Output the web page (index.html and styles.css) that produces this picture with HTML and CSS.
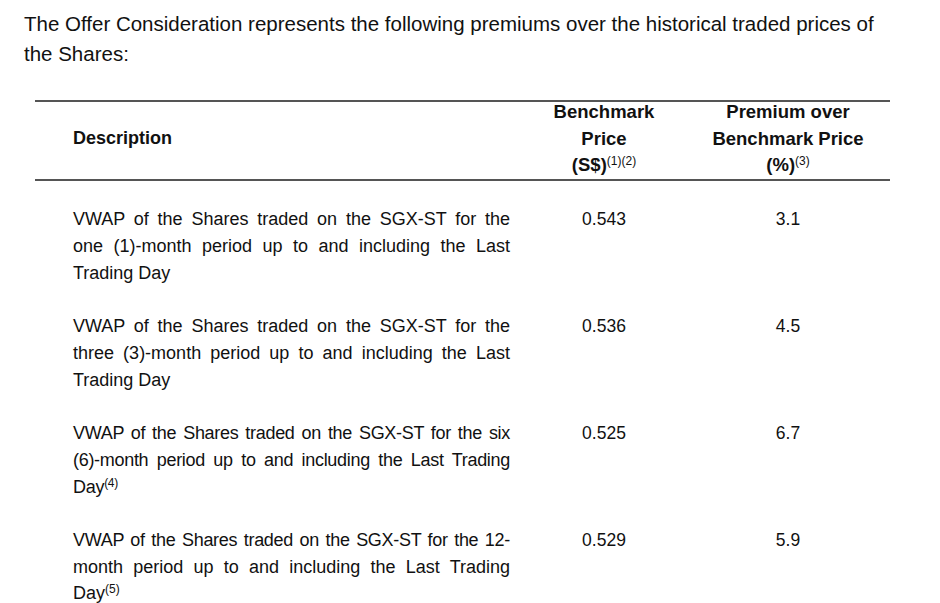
FILE: index.html
```html
<!DOCTYPE html>
<html>
<head>
<meta charset="utf-8">
<link rel="stylesheet" href="styles.css">
</head>
<body>
<p class="intro">The Offer Consideration represents the following premiums over the historical traded prices of the Shares:</p>
<div class="tbl">
  <div class="row head">
    <div class="desc hdesc">Description</div>
    <div class="bench">Benchmark<br>Price<br>(S$)<sup>(1)(2)</sup></div>
    <div class="prem">Premium over<br>Benchmark Price<br>(%)<sup>(3)</sup></div>
  </div>
  <div class="row">
    <div class="desc"><span class="jl">VWAP of the Shares traded on the SGX-ST for the</span><span class="jl">one (1)-month period up to and including the Last</span><span>Trading Day</span></div>
    <div class="bench num">0.543</div>
    <div class="prem num">3.1</div>
  </div>
  <div class="row">
    <div class="desc"><span class="jl">VWAP of the Shares traded on the SGX-ST for the</span><span class="jl">three (3)-month period up to and including the Last</span><span>Trading Day</span></div>
    <div class="bench num">0.536</div>
    <div class="prem num">4.5</div>
  </div>
  <div class="row">
    <div class="desc tight"><span class="jl">VWAP of the Shares traded on the SGX-ST for the six</span><span class="jl">(6)-month period up to and including the Last Trading</span><span>Day<sup>(4)</sup></span></div>
    <div class="bench num">0.525</div>
    <div class="prem num">6.7</div>
  </div>
  <div class="row last">
    <div class="desc"><span class="jl tight">VWAP of the Shares traded on the SGX-ST for the 12-</span><span class="jl">month period up to and including the Last Trading</span><span class="lastline">Day<sup>(5)</sup></span></div>
    <div class="bench num">0.529</div>
    <div class="prem num">5.9</div>
  </div>
</div>
</body>
</html>
```
FILE: styles.css
```css
html, body {
  margin: 0;
  padding: 0;
  background: #ffffff;
}
body {
  font-family: "Liberation Sans", Arial, sans-serif;
  color: #111111;
  width: 940px;
  height: 603px;
  overflow: hidden;
}
.intro {
  margin: 0;
  padding: 9px 0 0 24px;
  width: 880px;
  font-size: 20.5px;
  line-height: 30px;
}
.tbl {
  margin: 31px 0 0 35px;
  width: 855px;
}
.row {
  display: grid;
  grid-template-columns: 495px 148px 212px;
  padding-bottom: 26px;
}
.row.last {
  padding-bottom: 0;
}
.row.head {
  border-top: 2px solid #555555;
  border-bottom: 2px solid #555555;
  padding: 0;
  margin-bottom: 25px;
  font-weight: bold;
  font-size: 18.5px;
  line-height: 26.5px;
}
.row.head > div {
  margin-top: -3px;
}
.hdesc {
  align-self: center;
}
.desc {
  padding-left: 38px;
  width: 437px;
  font-size: 18px;
  line-height: 27px;
}
.desc span {
  display: block;
}
.desc .lastline {
  line-height: 24px;
}
.jl {
  text-align: justify;
  text-align-last: justify;
}
.tight {
  letter-spacing: -0.3px;
}
.bench {
  text-align: center;
}
.prem {
  text-align: center;
  padding-left: 8px;
}
.num {
  font-size: 17.5px;
  line-height: 27px;
}
sup {
  font-size: 12px;
  line-height: 0;
  vertical-align: 6px;
  font-weight: normal;
}
```
